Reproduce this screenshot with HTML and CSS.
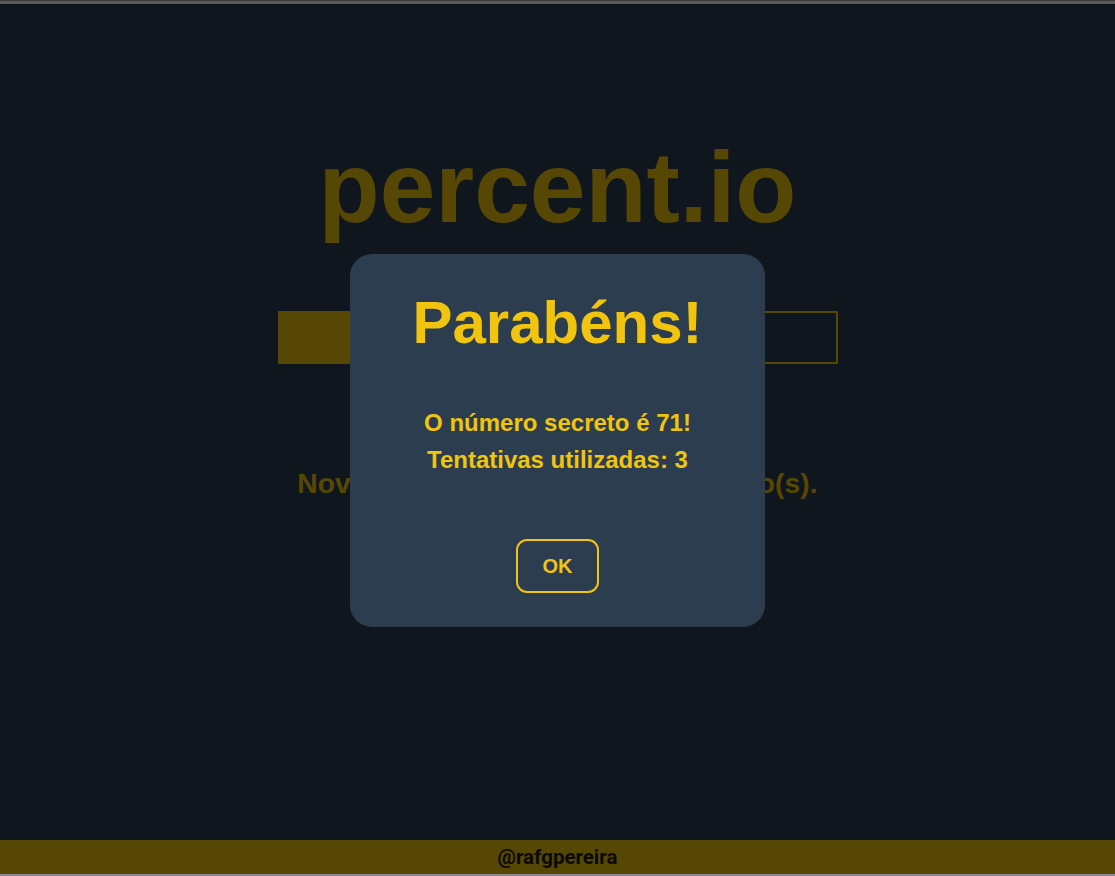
FILE: index.html
```html
<!DOCTYPE html>
<html lang="pt-BR">
<head>
<meta charset="utf-8">
<title>percent.io</title>
<link rel="stylesheet" href="styles.css">
</head>
<body>
<div class="page">
  <main class="main">
    <h1 class="logo">percent.io</h1>
    <form class="guess">
      <input class="guess-fill" type="text" aria-label="Palpite">
      <input class="guess-input" type="text" aria-label="Número">
    </form>
    <p class="status">Novo jogo começará em 5 segundo(s).</p>
  </main>
  <footer class="footer">@rafgpereira</footer>
</div>
<div class="overlay">
  <div class="modal">
    <h2 class="modal-title">Parabéns!</h2>
    <div class="modal-body">
      <p class="modal-line">O número secreto é 71!</p>
      <p class="modal-line">Tentativas utilizadas: 3</p>
    </div>
    <button type="button" class="modal-ok">OK</button>
  </div>
</div>
</body>
</html>
```
FILE: styles.css
```css
html, body {
  margin: 0;
  padding: 0;
  height: 100%;
}
body {
  background: #2c3e50;
  font-family: "Liberation Sans", Arial, sans-serif;
  color: #f1c40f;
  border-top: 1px solid #3a3a3a;
  box-sizing: border-box;
}
.page {
  border-top: 3px solid #5c5c5c;
  border-bottom: 2px solid #8a8a8a;
  box-sizing: border-box;
  height: 100%;
  display: flex;
  flex-direction: column;
}
.main {
  flex: 1;
  display: flex;
  flex-direction: column;
  align-items: center;
  padding-top: 126px;
}
.logo {
  margin: 0;
  font-size: 100px;
  font-weight: 700;
  line-height: 115px;
  letter-spacing: 0;
}
.guess {
  margin-top: 66px;
  width: 560px;
  height: 53px;
  display: flex;
}
.guess-fill {
  width: 300px;
  border: none;
  margin: 0;
  padding: 0;
  background: #f1c40f;
  outline: none;
}
.guess-input {
  flex: 1;
  min-width: 0;
  border: 2px solid #f1c40f;
  background: transparent;
  margin: 0;
  padding: 0;
  outline: none;
}
.status {
  margin: 103px 0 0;
  font-size: 28.2px;
  font-weight: 700;
  letter-spacing: 0.1px;
}
.footer {
  height: 34px;
  background: #f1c40f;
  color: #1c1c1c;
  display: flex;
  align-items: center;
  justify-content: center;
  font-family: Roboto, "Liberation Sans", sans-serif;
  font-weight: 700;
  font-size: 20.5px;
}
.overlay {
  position: fixed;
  left: 0;
  right: 0;
  top: 4px;
  bottom: 2px;
  background: rgba(0, 0, 0, 0.64);
  display: flex;
  align-items: center;
  justify-content: center;
}
.modal {
  width: 415px;
  box-sizing: border-box;
  background: #2d3d50;
  border-radius: 22px;
  padding: 34px 20px;
  display: flex;
  flex-direction: column;
  align-items: center;
  margin-top: 3px;
}
.modal-title {
  margin: 0;
  font-size: 60px;
  line-height: 69px;
  font-weight: 700;
  color: #f1c40f;
}
.modal-body {
  margin-top: 47px;
  display: flex;
  flex-direction: column;
  align-items: center;
}
.modal-line {
  margin: 0;
  font-size: 24px;
  line-height: 37px;
  font-weight: 700;
  color: #f1c40f;
}
.modal-ok {
  margin-top: 61px;
  width: 83px;
  height: 54px;
  border: 2px solid #f1c40f;
  border-radius: 11px;
  background: transparent;
  color: #f1c40f;
  font: 700 20px "Liberation Sans", Arial, sans-serif;
  padding: 0;
}
```
